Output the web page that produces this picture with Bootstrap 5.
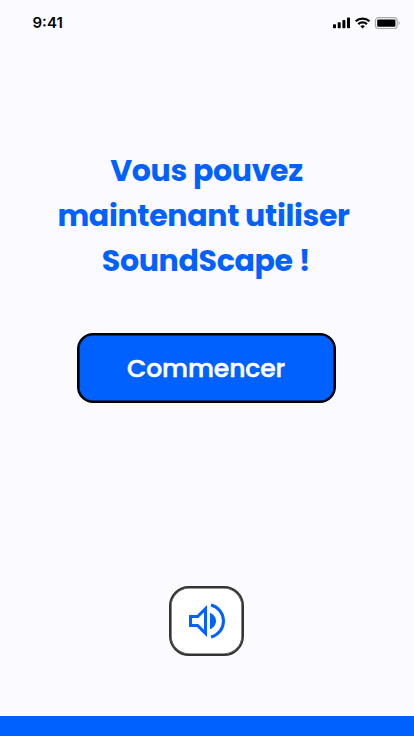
<!DOCTYPE html>
<html lang="fr">
<head>
<meta charset="utf-8">
<meta name="viewport" content="width=device-width, initial-scale=1">
<title>SoundScape</title>
<link href="https://cdn.jsdelivr.net/npm/bootstrap@5.3.0/dist/css/bootstrap.min.css" rel="stylesheet">
<style>
body { background: #fbfaff; font-family: Poppins, Inter, sans-serif; }
.screen { height: 736px; width: 414px; }
.status { height: 45px; padding: 0 13px 0 32.5px; }
.clock { font: 600 15px/1 Inter, sans-serif; letter-spacing: 0; color: #000; }
.headline { margin-top: 103px; font-size: 30px; line-height: 45px; font-weight: 700; color: #0061ff; letter-spacing: -.32px; }
.headline span { white-space: nowrap; }
.l1 { margin-right: 1px; }
.l2 { margin-right: 7px; }
.l3 { margin-right: 2px; }
.start { width: 259px; height: 70px; margin-top: 50px; margin-right: 1px; padding: 2px 1px 0 0; border: 2px solid #000; box-shadow: inset 0 0 0 .6px #000; border-radius: 16px; background: #0061ff; font-size: 25px; font-weight: 500; letter-spacing: -.1px; -webkit-text-stroke: .5px #fff; }
.start:hover { background: #0055e0; border-color: #000; }
.sound { width: 75px; height: 70px; margin-top: 183px; margin-right: 1px; border: 2px solid #333; box-shadow: inset 0 0 0 .6px #333; border-radius: 20px; background: #fff; }
.strip { height: 20px; background: #0061ff; }
</style>
<script src="https://cdn.jsdelivr.net/npm/bootstrap@5.3.0/dist/js/bootstrap.bundle.min.js"></script>
</head>
<body class="overflow-hidden">
<div class="screen d-flex flex-column">
  <header class="status d-flex align-items-center justify-content-between">
    <span class="clock">9:41</span>
    <svg width="69" height="14" viewBox="0 0 69 14" aria-hidden="true">
      <g fill="#000">
        <rect x="1" y="8.3" width="3" height="4" rx=".8"/>
        <rect x="5.7" y="6.3" width="3" height="6" rx=".8"/>
        <rect x="10.4" y="4" width="3" height="8.3" rx=".8"/>
        <rect x="15" y="1.6" width="3" height="10.7" rx=".8"/>
        <rect x="45.2" y="3.4" width="18.2" height="7.4" rx="1.2"/>
      </g>
      <g fill="none" stroke="#000" stroke-width="2.2">
        <path d="M23.7 5.3a10 10 0 0 1 13.8 0"/>
        <path d="M26.3 8.1a6.2 6.2 0 0 1 8.6 0"/>
      </g>
      <path d="M28.3 10.2a3.5 3.5 0 0 1 4.6 0l-2.3 2.4z"/>
      <rect x="43.4" y="1.7" width="21.7" height="10.8" rx="3" fill="none" stroke="#aaa" stroke-width="1.2"/>
      <path d="M66.5 5.3c1.7.7 1.7 3 0 3.7z" fill="#aaa"/>
    </svg>
  </header>
  <main class="flex-grow-1 d-flex flex-column align-items-center">
    <h1 class="headline mb-0 d-flex flex-column align-items-center">
      <span class="l1">Vous pouvez</span>
      <span class="l2">maintenant utiliser</span>
      <span class="l3">SoundScape !</span>
    </h1>
    <button type="button" class="start btn btn-primary">Commencer</button>
    <button type="button" class="sound btn p-0 d-flex align-items-center justify-content-center" aria-label="Volume">
      <svg width="48" height="48" viewBox="0 0 48 48" fill="#0061ff">
        <path fill-rule="evenodd" d="M6 18h8L24 8v32L14 30H6zM9 21v6h6.2l5.8 5.8V15.2L15.2 21z"/>
        <path d="M27 15.7c3.6 1.5 6 4.8 6 8.3s-2.4 6.8-6 8.3z"/>
        <path d="M28 8a16.5 16.5 0 0 1 0 32" fill="none" stroke="#0061ff" stroke-width="3"/>
      </svg>
    </button>
  </main>
  <footer class="strip"></footer>
</div>
</body>
</html>
